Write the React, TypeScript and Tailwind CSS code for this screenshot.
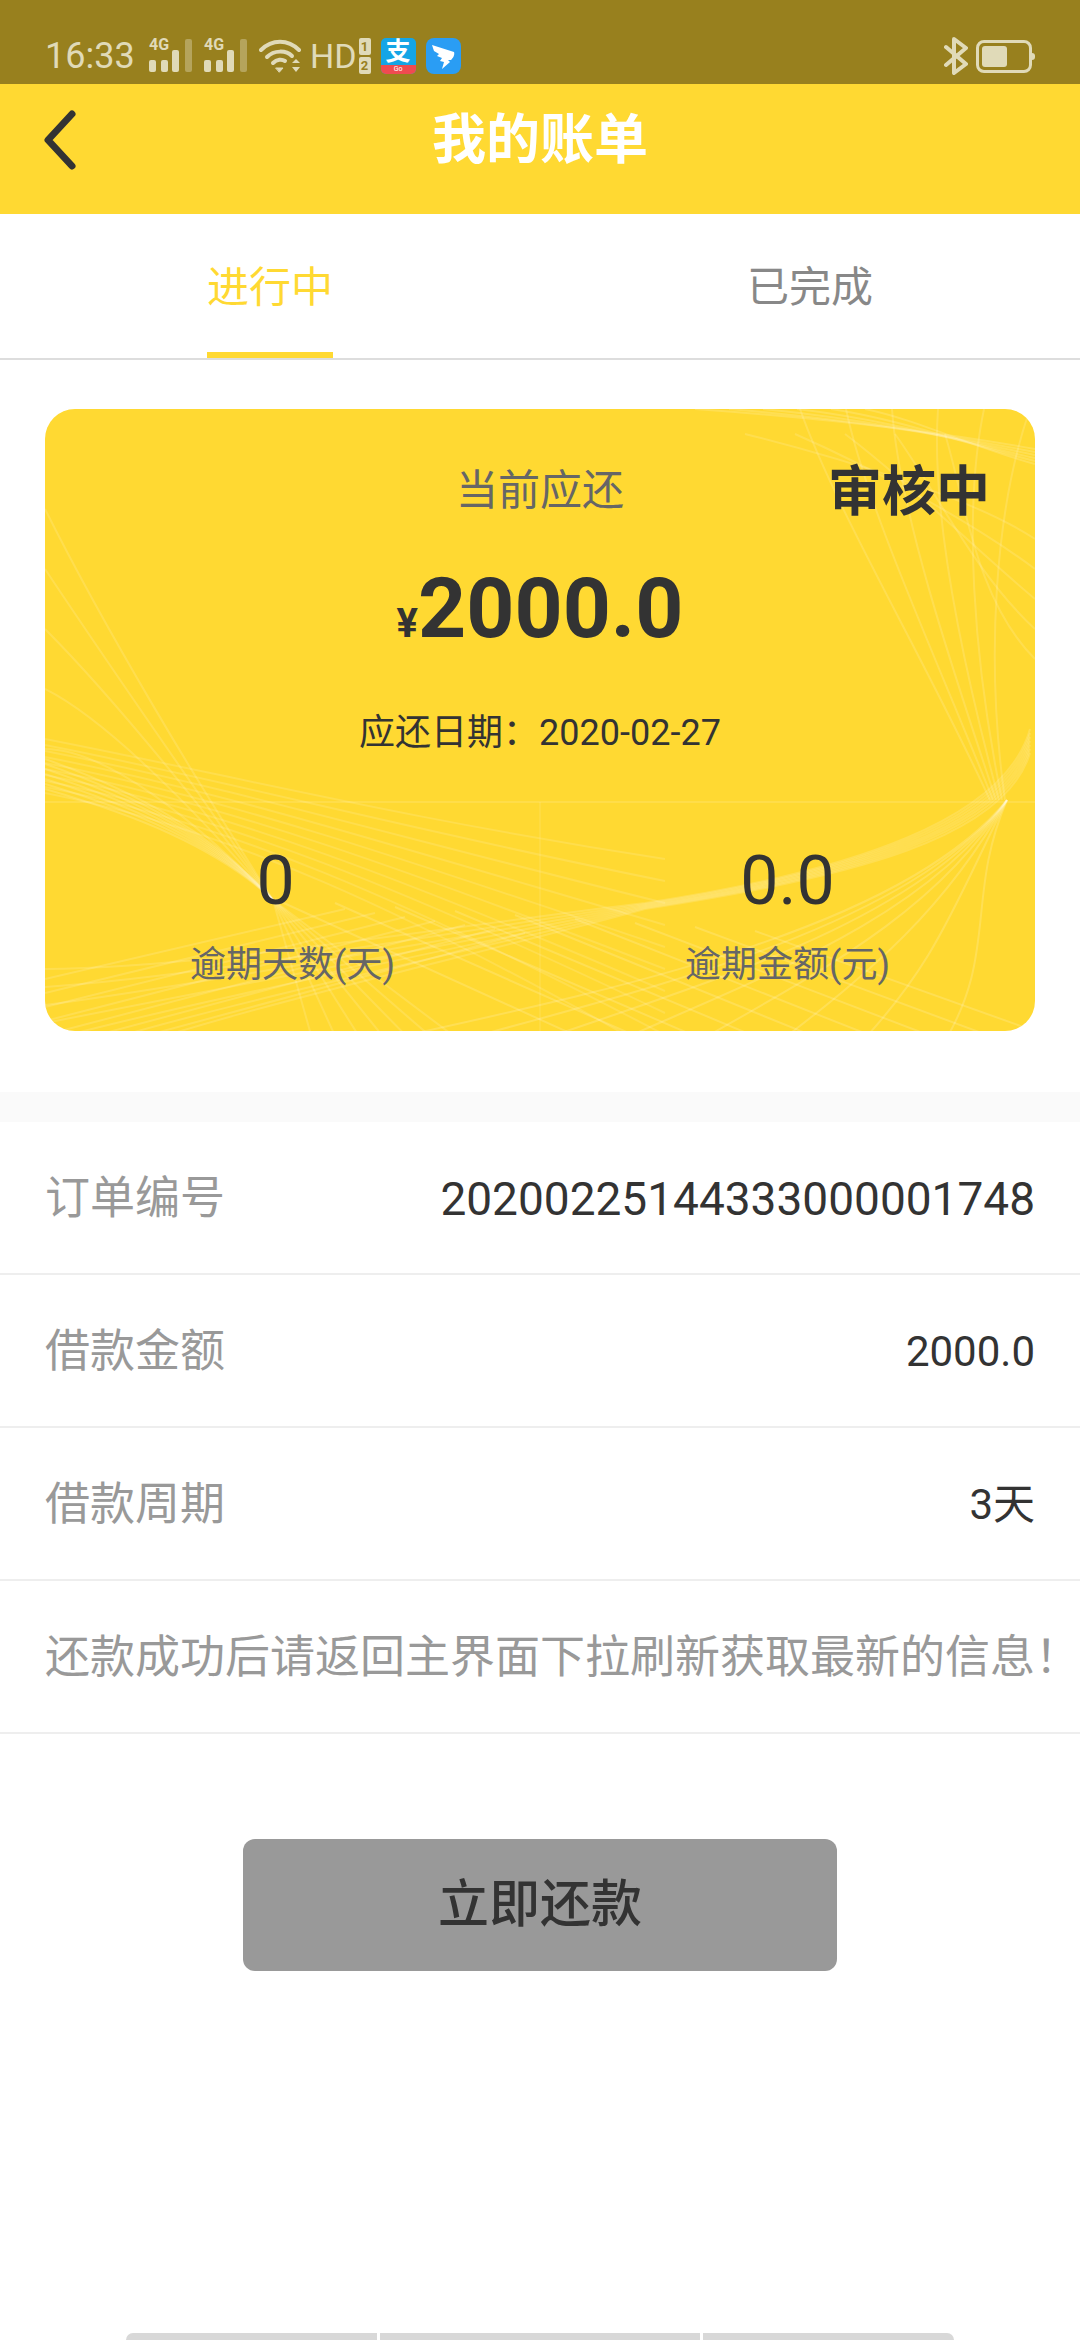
const fade = "#ffffff";

function range(n: number) {
  return Array.from({ length: n }, (_, i) => i);
}

function CardPattern() {
  return (
    <svg className="absolute inset-0 h-full w-full" viewBox="0 0 990 622" fill="none" stroke={fade} strokeWidth="2">
      {/* left band sweeping down to the first stat */}
      {range(7).map((i) => (
        <path key={`a${i}`} opacity="0.16" d={`M0 ${350 + i * 5}C90 ${382 + i * 4} 170 ${425 + i * 2} 228 491`} />
      ))}
      {/* fan leaving the first stat towards the bottom edge */}
      {range(7).map((i) => (
        <path key={`a2${i}`} opacity="0.14" d={`M228 491L${270 + i * 26} 640`} />
      ))}
      {/* steep lines from the upper left */}
      {range(5).map((i) => (
        <path key={`b${i}`} opacity="0.14" d={`M0 ${100 + i * 60}C60 ${220 + i * 30} 150 ${370 + i * 10} 228 491`} />
      ))}
      {/* shallow fan running right */}
      {range(10).map((i) => (
        <path key={`c${i}`} opacity="0.13" d={`M0 ${330 + i * 6}C180 ${365 + i * 6} 360 ${410 + i * 10} 620 ${450 + i * 22}`} />
      ))}
      {/* right band, rises to the right edge */}
      {range(7).map((i) => (
        <path key={`d${i}`} opacity="0.15" d={`M985 ${320 + i * 4}C960 ${410 + i * 3} 810 ${462 + i} 600 ${494 + i}C400 ${518 + i * 6} 150 ${560 + i * 8} 0 ${560 + i * 18}`} />
      ))}
      {/* arcs from the bottom edge up to the right */}
      {range(8).map((i) => (
        <path key={`e${i}`} opacity="0.17" d={`M${300 + i * 85} 640C${520 + i * 62} ${590 - i * 6} ${850 + i * 10} ${530 - i * 6} 962 391`} />
      ))}
      {/* crossing grid along the bottom */}
      {range(9).map((i) => (
        <path key={`f${i}`} opacity="0.16" d={`M${230 + i * 60} ${490 + i * 4}L${560 + i * 60} 640`} />
      ))}
      {range(7).map((i) => (
        <path key={`g${i}`} opacity="0.15" d={`M0 ${570 + i * 14}L${300 + i * 30} ${500 + i * 4}`} />
      ))}
      {/* top right band and fan, ends at the point the arcs meet */}
      {range(6).map((i) => (
        <path key={`h${i}`} opacity="0.16" d={`M${650 + i * 34} 0C${790 + i * 16} 10 ${900 + i * 6} ${24 + i * 3} 990 ${40 + i * 3}`} />
      ))}
      {range(6).map((i) => (
        <path key={`k${i}`} opacity="0.15" d={`M${755 + i * 46} 0C${790 + i * 32} 100 ${880 + i * 12} 250 ${945 + i * 3} 391`} />
      ))}
      {range(5).map((i) => (
        <path key={`m${i}`} opacity="0.14" d={`M${700 + i * 50} 25C${800 + i * 30} ${50 + i * 10} 930 ${90 + i * 25} 990 ${130 + i * 30}`} />
      ))}
      {/* thin cross lines */}
      <path opacity="0.12" d="M0 393H990" />
      <path opacity="0.08" d="M495 393V622" />
    </svg>
  );
}

function SignalIcon() {
  return (
    <div className="relative h-[34px] w-[44px]">
      <span className="absolute left-0 top-[-3px] text-[16px] font-bold leading-[17px] text-[#e0dab8]">4G</span>
      <svg className="absolute inset-0" width="44" height="34" viewBox="0 0 44 34" fill="#e0dab8">
        <rect x="0" y="21" width="7" height="12" rx="2" />
        <rect x="12" y="21" width="7" height="12" rx="2" />
        <rect x="23" y="11" width="7" height="22" rx="2" />
        <rect x="36" y="0" width="7" height="33" rx="2" opacity="0.4" />
      </svg>
    </div>
  );
}

function StatusBar() {
  return (
    <div className="flex h-[84px] items-center bg-[#98801e] pl-[45px] pr-[48px] pt-[28px] text-[#e0dab8]">
      <span className="w-[104px] text-[36px] leading-[40px]">16:33</span>
      <SignalIcon />
      <div className="ml-[11px]">
        <SignalIcon />
      </div>
      <svg className="ml-[11px]" width="42" height="34" viewBox="0 0 42 34" fill="none" stroke="#e0dab8" strokeWidth="4" strokeLinecap="round">
        <path d="M2 11C13 0 29 0 40 11" />
        <path d="M8 18C15 11 27 11 33 17" />
        <path d="M14 24C18 20 23 20 26 22" />
        <path d="M17 29H24L20.5 33Z" fill="#e0dab8" strokeWidth="1" />
        <path d="M33 24L37 20L41 24ZM33 28L37 33L41 28Z" fill="#e0dab8" stroke="none" />
      </svg>
      <span className="ml-[9px] text-[34px] leading-[36px]">HD</span>
      <div className="ml-[2px] flex flex-col gap-[2px]">
        <span className="h-[17px] w-[12px] rounded-[2px] bg-[#e0dab8] text-center text-[13px] font-bold leading-[17px] text-[#98801e]">1</span>
        <span className="h-[17px] w-[12px] rounded-[2px] bg-[#e0dab8] text-center text-[13px] font-bold leading-[17px] text-[#98801e]">2</span>
      </div>
      <div className="ml-[10px] flex h-[36px] w-[35px] flex-col overflow-hidden rounded-[5px] bg-[#14a5e6]">
        <span className="h-[27px] text-center text-[25px] font-bold leading-[27px] text-white">支</span>
        <span className="h-[9px] bg-[#ef4b50] text-center text-[7px] leading-[9px] text-white">Go</span>
      </div>
      <div className="ml-[10px] flex h-[36px] w-[35px] items-center justify-center rounded-[8px] bg-[#2a9df4]">
        <svg width="25" height="27" viewBox="0 0 25 27" fill="#fff">
          <path d="M1 2L23 9C24 12 22 15 20 17L17 17L19 19L11 26L13 19L9 18L11 15L6 13L8 11L3 8Z" />
        </svg>
      </div>
      <div className="flex-1" />
      <svg width="24" height="40" viewBox="0 0 24 40" fill="none" stroke="#e0dab8" strokeWidth="4" strokeLinecap="round" strokeLinejoin="round">
        <path d="M2 11L22 28L10 37V3L22 12L2 29" />
      </svg>
      <div className="relative ml-[8px] h-[33px] w-[56px] rounded-[8px] border-[3px] border-[#e0dab8] p-[3px]">
        <div className="h-full w-[25px] rounded-[3px] bg-[#e0dab8]" />
        <div className="absolute right-[-6px] top-[10px] h-[7px] w-[3px] rounded-r-[3px] bg-[#e0dab8]" />
      </div>
    </div>
  );
}

function Header() {
  return (
    <div className="relative flex h-[130px] items-center justify-center bg-[#ffd932] pb-[16px]">
      <svg className="absolute left-[42px] top-[25px]" width="36" height="62" viewBox="0 0 36 62" fill="none" stroke="#333" strokeWidth="7" strokeLinecap="round" strokeLinejoin="round">
        <path d="M30 5L6 31L30 57" />
      </svg>
      <span className="text-[54px] font-bold leading-[60px] text-white">我的账单</span>
    </div>
  );
}

function Tabs() {
  return (
    <div className="flex h-[146px] border-b-2 border-[#ddd]">
      <div className="flex flex-1 flex-col items-center">
        <span className="mt-[49px] text-[42px] leading-[50px] text-[#ffd932]">进行中</span>
        <div className="mt-auto h-[6px] w-[126px] bg-[#ffd932]" />
      </div>
      <div className="flex flex-1 justify-center">
        <span className="mt-[49px] text-[42px] leading-[50px] text-[#888]">已完成</span>
      </div>
    </div>
  );
}

function BillCard() {
  return (
    <div className="relative mx-[45px] mt-[49px] h-[622px] overflow-hidden rounded-[30px] bg-[#ffd932]">
      <CardPattern />
      <span className="absolute right-[45px] top-[53px] text-[54px] font-bold leading-[62px] text-[#333]">审核中</span>
      <div className="relative flex flex-col items-center">
        <span className="mt-[57px] text-[42px] leading-[50px] text-[#666]">当前应还</span>
        <div className="mt-[43px] flex h-[100px] items-baseline text-[#333]">
          <span className="text-[40px] font-bold leading-[100px]">¥</span>
          <span className="text-[84px] font-bold leading-[100px]">2000.0</span>
        </div>
        <span className="mt-[52px] text-[36px] leading-[44px] text-[#333]">应还日期：2020-02-27</span>
        <div className="mt-[86px] grid w-full grid-cols-2">
          <div className="flex flex-col items-center">
            <span className="pr-[34px] text-[68px] leading-[80px] text-[#333]">0</span>
            <span className="mt-[22px] text-[36px] leading-[44px] text-[#666]">逾期天数(天)</span>
          </div>
          <div className="flex flex-col items-center">
            <span className="text-[68px] leading-[80px] text-[#333]">0.0</span>
            <span className="mt-[22px] text-[36px] leading-[44px] text-[#666]">逾期金额(元)</span>
          </div>
        </div>
      </div>
    </div>
  );
}

const rows = [
  { label: "订单编号", value: "20200225144333000001748", size: "text-[46px]" },
  { label: "借款金额", value: "2000.0", size: "text-[42px]" },
  { label: "借款周期", value: "3天", size: "text-[42px]" },
];

export default function App() {
  return (
    <div className="flex h-[2340px] w-[1080px] flex-col overflow-hidden bg-white font-['Roboto','Noto_Sans_CJK_SC',sans-serif]" lang="zh-CN">
      <StatusBar />
      <Header />
      <Tabs />
      <BillCard />
      <div className="mt-[61px] h-[30px] bg-[#fafafa]" />
      {rows.map((r) => (
        <div key={r.label} className="flex h-[153px] items-center justify-between border-b-2 border-[#eee] px-[45px] pt-[3px]">
          <span className="text-[45px] leading-[54px] text-[#999]">{r.label}</span>
          <span className={`${r.size} leading-[54px] text-[#333]`}>{r.value}</span>
        </div>
      ))}
      <div className="flex h-[153px] items-center border-b-2 border-[#eee] pl-[45px] pt-[3px]">
        <span className="whitespace-nowrap text-[45px] leading-[54px] text-[#999]">还款成功后请返回主界面下拉刷新获取最新的信息！</span>
      </div>
      <button className="mx-auto mt-[105px] flex h-[132px] w-[594px] items-center justify-center rounded-[12px] bg-[#999] text-[51px] font-medium text-[#333]">
        立即还款
      </button>
      <div className="mt-auto flex justify-center gap-[3px]">
        <div className="h-[7px] w-[251px] rounded-tl-[8px] bg-[#d8d8d8]" />
        <div className="h-[7px] w-[320px] bg-[#d8d8d8]" />
        <div className="h-[7px] w-[251px] rounded-tr-[8px] bg-[#d8d8d8]" />
      </div>
    </div>
  );
}
